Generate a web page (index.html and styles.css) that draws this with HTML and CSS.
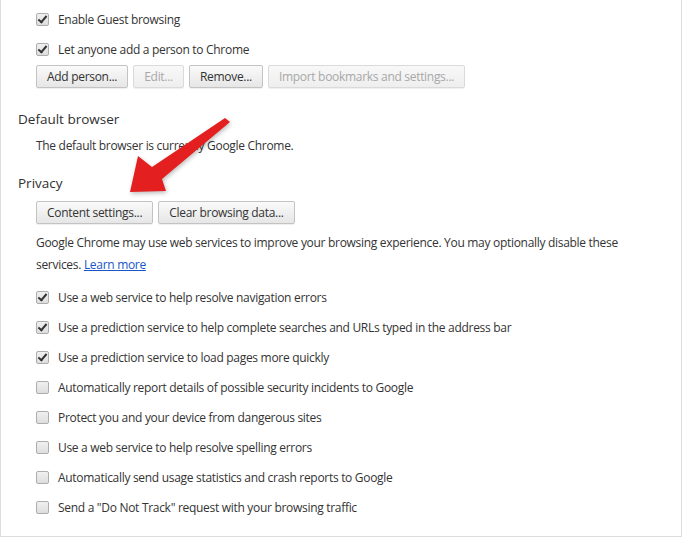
FILE: index.html
```html
<!DOCTYPE html>
<html lang="en">

<head>
    <meta charset="UTF-8">
    <title>Settings</title>
    <link rel="stylesheet" href="styles.css">
</head>

<body>
    <div class="settings-panel">
        <div class="settings-section first">
            <div class="check-row"><span class="check on"></span><span>Enable Guest browsing</span></div>
            <div class="check-row"><span class="check on"></span><span>Let anyone add a person to Chrome</span></div>
            <div class="button-row">
                <button class="btn">Add person...</button>
                <button class="btn" disabled>Edit...</button>
                <button class="btn">Remove...</button>
                <button class="btn" disabled>Import bookmarks and settings...</button>
            </div>
        </div>

        <div class="settings-section">
            <h3 class="section-title">Default browser</h3>
            <p class="section-text">The default browser is currently Google Chrome.</p>
        </div>

        <div class="settings-section">
            <h3 class="section-title">Privacy</h3>
            <div class="button-row">
                <button class="btn">Content settings...</button>
                <button class="btn">Clear browsing data...</button>
            </div>
            <p class="privacy-text">Google Chrome may use web services to improve your browsing experience. You may optionally disable these services. <a href="#">Learn more</a></p>
            <div class="check-list">
                <div class="check-row"><span class="check on"></span><span>Use a web service to help resolve navigation errors</span></div>
                <div class="check-row"><span class="check on"></span><span>Use a prediction service to help complete searches and URLs typed in the address bar</span></div>
                <div class="check-row"><span class="check on"></span><span>Use a prediction service to load pages more quickly</span></div>
                <div class="check-row"><span class="check"></span><span>Automatically report details of possible security incidents to Google</span></div>
                <div class="check-row"><span class="check"></span><span>Protect you and your device from dangerous sites</span></div>
                <div class="check-row"><span class="check"></span><span>Use a web service to help resolve spelling errors</span></div>
                <div class="check-row"><span class="check"></span><span>Automatically send usage statistics and crash reports to Google</span></div>
                <div class="check-row"><span class="check"></span><span>Send a "Do Not Track" request with your browsing traffic</span></div>
            </div>
        </div>

        <!-- red callout arrow pointing at Content settings -->
        <svg class="callout-arrow" width="682" height="538" viewBox="0 0 682 538">
            <polygon points="224,118 229,122 161,179 165,191 129,192 137,156 151,167" fill="#e3201f" />
        </svg>
    </div>
</body>

</html>
```

FILE: styles.css
```css
* {
    margin: 0;
    padding: 0;
    box-sizing: border-box;
}

body {
    font: 12px "Open Sans", "Noto Sans", Arial, sans-serif;
    color: #333;
    background: #fff;
}

.settings-panel {
    position: relative;
    width: 682px;
    height: 537px;
    border: 1px solid #dcdcdc;
    border-top: none;
    padding: 4px 0 0 17px;
}

.settings-section {
    margin-bottom: 15px;
}

.settings-section.first {
    margin-bottom: 22px;
}

.section-title {
    font-size: 13.5px;
    font-weight: 400;
    color: #303030;
    line-height: 18px;
    margin-bottom: 9px;
}

.section-text {
    padding-left: 18px;
    line-height: 18px;
    margin-bottom: 19px;
    letter-spacing: -0.3px;
}

.check-row {
    display: flex;
    align-items: center;
    height: 30px;
    padding-left: 18px;
    letter-spacing: -0.3px;
}

.check {
    position: relative;
    width: 13px;
    height: 13px;
    margin-right: 9px;
    border: 1px solid #adadad;
    border-radius: 2px;
    background: linear-gradient(#f0f0f0, #dedede);
    flex-shrink: 0;
}

.check.on:after {
    content: '';
    position: absolute;
    left: 3px;
    top: 0px;
    width: 3px;
    height: 7px;
    border: solid #333;
    border-width: 0 2px 2px 0;
    transform: rotate(40deg);
}

.button-row {
    display: flex;
    gap: 5px;
    padding-left: 18px;
    margin-top: 1px;
}

.btn {
    height: 23px;
    padding: 0 10px;
    font: inherit;
    color: #333;
    letter-spacing: -0.3px;
    border: 1px solid #c3c3c3;
    border-radius: 2px;
    background: linear-gradient(#fafafa, #e6e6e6);
    box-shadow: 0 1px 0 rgba(0, 0, 0, 0.06);
}

.btn:disabled {
    color: #a8a8a8;
    border-color: #dadada;
    background: linear-gradient(#f8f8f8, #eeeeee);
}

.privacy-text {
    width: 620px;
    padding-left: 18px;
    margin-top: 8px;
    line-height: 22px;
    letter-spacing: -0.3px;
    margin-bottom: 6px;
}

.privacy-text a {
    color: #1a55c8;
}

.callout-arrow {
    position: absolute;
    left: 0;
    top: 0;
    pointer-events: none;
    filter: drop-shadow(1px 2px 2px rgba(0, 0, 0, 0.25));
}
```
